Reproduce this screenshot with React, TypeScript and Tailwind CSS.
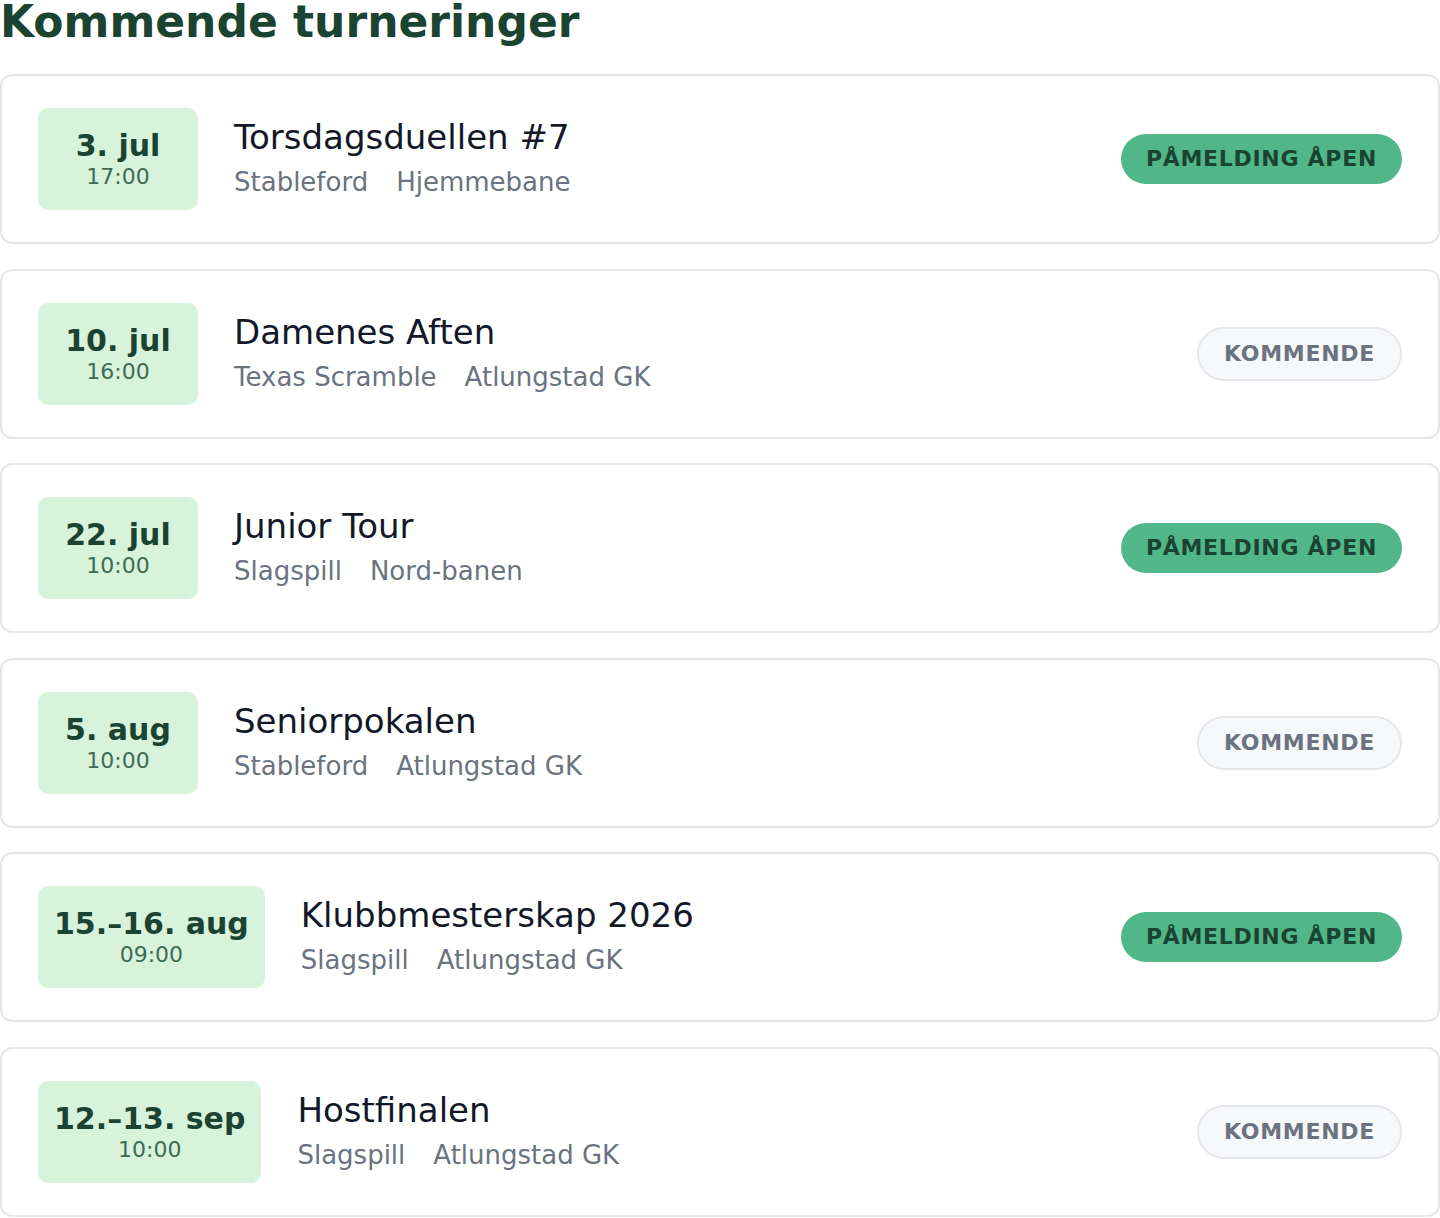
type Tournament = {
    date: string;
    time: string;
    name: string;
    format: string;
    course: string;
    open: boolean;
};

const tournaments: Tournament[] = [
    { date: "3. jul", time: "17:00", name: "Torsdagsduellen #7", format: "Stableford", course: "Hjemmebane", open: true },
    { date: "10. jul", time: "16:00", name: "Damenes Aften", format: "Texas Scramble", course: "Atlungstad GK", open: false },
    { date: "22. jul", time: "10:00", name: "Junior Tour", format: "Slagspill", course: "Nord-banen", open: true },
    { date: "5. aug", time: "10:00", name: "Seniorpokalen", format: "Stableford", course: "Atlungstad GK", open: false },
    { date: "15.–16. aug", time: "09:00", name: "Klubbmesterskap 2026", format: "Slagspill", course: "Atlungstad GK", open: true },
    { date: "12.–13. sep", time: "10:00", name: "Hostfinalen", format: "Slagspill", course: "Atlungstad GK", open: false },
];

const StatusBadge = ({ open }: { open: boolean }) => {
    if (open) {
        return (
            <span className="rounded-full bg-[#52b788] px-[25px] py-3 text-[22px] leading-[26px] font-bold tracking-[0.7px] whitespace-nowrap text-[#1b4332]">
                PÅMELDING ÅPEN
            </span>
        );
    }
    return (
        <span className="rounded-full border-2 border-[#e5e7eb] bg-[#f7f8fa] px-[25px] py-3 text-[22px] leading-[26px] font-bold tracking-[0.7px] whitespace-nowrap text-[#6b7280]">
            KOMMENDE
        </span>
    );
};

const TournamentCard = ({ t }: { t: Tournament }) => {
    return (
        <div className="flex items-center rounded-xl border-2 border-[#e5e7eb] bg-white px-9 py-8">
            <div className="flex h-[102px] min-w-[160px] flex-col items-center justify-center rounded-[10px] bg-[#d8f3dc] px-4">
                <span className="text-[30px] leading-[36px] font-bold whitespace-nowrap text-[#1b4332]">
                    {t.date}
                </span>
                <span className="text-[22px] leading-[26px] text-[#3f6b55]">
                    {t.time}
                </span>
            </div>
            <div className="ml-9 flex flex-1 flex-col pb-[3px]">
                <h2 className="text-[34px] leading-[40px] text-[#111827]">
                    {t.name}
                </h2>
                <div className="mt-[9px] flex gap-7 text-[26px] leading-[32px] text-[#6b7280]">
                    <span>{t.format}</span>
                    <span>{t.course}</span>
                </div>
            </div>
            <StatusBadge open={t.open} />
        </div>
    );
};

export default function App() {
    return (
        <main className="bg-white font-['DejaVu_Sans',sans-serif]">
            <h1 className="mb-[30px] text-[44px] leading-none font-bold text-[#1b4332]">
                Kommende turneringer
            </h1>
            <div className="flex flex-col gap-[24.6px]">
                {tournaments.map((t) => (
                    <TournamentCard key={t.name} t={t} />
                ))}
            </div>
        </main>
    );
}
